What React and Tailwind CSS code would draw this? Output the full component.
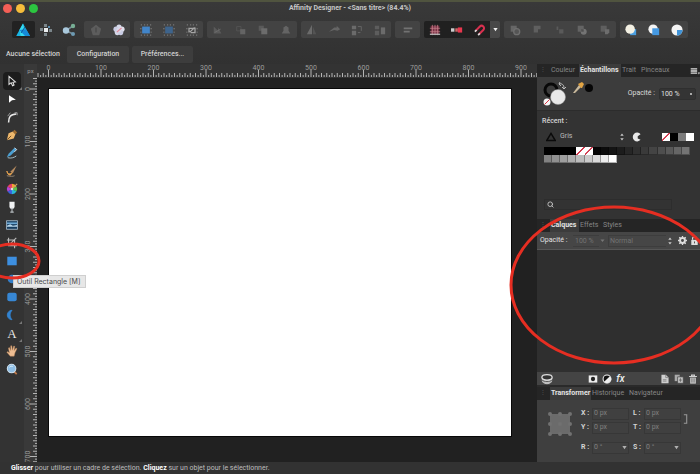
import React, { useEffect, useState } from 'react';
import { Search } from 'lucide-react';

const SCALE = 52.5; // pixels on screen for 100 document pixels

const Icon = ({ children, size = 14, className = '' }) => (
  <svg width={size} height={size} viewBox="0 0 14 14" fill="none" className={`shrink-0 ${className}`} aria-hidden="true">
    {children}
  </svg>
);

const dots = (
  <path d="M1 1h1M5 1h1M8 1h1M12 1h1M1 13h1M5 13h1M8 13h1M12 13h1M1 5v1M13 5v1M1 9v1M13 9v1" stroke="#8b8b8b" strokeWidth="1.4" />
);

// Barre d'outils principale
const personas = [
  { label: 'Persona Designer', active: true, art: <g><path d="M7 0.5L14 13H0.2z" fill="#18b5e4" /><path d="M7 0.5L9.5 13H4.8L3.4 7z" fill="#36dbf0" /><path d="M3.4 7L10 6.2 14 13H9z" fill="#1689d8" /><path d="M5 10l4-6" stroke="#0d5b9c" /></g> },
  { label: 'Persona Pixel', art: <g><path d="M5 1h3v3H5zM1 5h3v3H1zM10 6h3v3h-3zM5 10h3v3H5z" fill="#7b868b" /><path d="M5 5h4v4H5z" fill="#eceff0" /><path d="M9 3h2v2H9z" fill="#5a8cae" /></g> },
  { label: 'Persona Export', art: <g><path d="M4 7.5L11 3M4 7.5L11 11" stroke="#778d98" strokeWidth="1.5" /><circle cx="4" cy="7.5" r="3.2" fill="#a9c8dc" /><circle cx="11" cy="3" r="2.2" fill="#77ae94" /><circle cx="11" cy="11" r="2" fill="#6d9ab3" /></g> },
];

const groups = [
  {
    width: 'w-[46px]',
    items: [
      { label: 'Valeurs par défaut', art: <g><path d="M7 1l6 4.5L10.8 13H3.2L1 5.5z" fill="#5d5d5d" /><path d="M7 4v6" stroke="#484848" strokeWidth="1.5" /></g> },
      { label: 'Rétablir les valeurs', art: <g><circle cx="7" cy="3.5" r="3" fill="#d7d9ea" /><circle cx="3.5" cy="6" r="3" fill="#c9cce4" /><circle cx="10.5" cy="6" r="3" fill="#e0e0ec" /><circle cx="5" cy="10" r="3" fill="#d5d7e8" /><circle cx="9" cy="10" r="3" fill="#c9cce4" /><circle cx="7" cy="7" r="3" fill="#d9d9e8" /><path d="M4.500 9.500L10 4.500" stroke="#e08a9c" strokeWidth="1.5" /></g> },
    ],
  },
  {
    width: 'w-[69px]',
    items: [
      { label: 'Cadre de sélection', art: <g>{dots}<path d="M2.500 3h9v8h-9z" fill="#4285c9" /></g> },
      { label: 'Cadre normal', art: <g>{dots}<path d="M2.500 3h9v8h-9z" fill="#3e648c" /></g> },
      { label: 'Transformer séparément', art: <g>{dots}<path d="M3.500 10V5h5M10.500 4v6H5.500M4.500 9.500l5.500-5.500" stroke="#a5a5a5" strokeWidth="1.5" /></g> },
    ],
  },
  {
    width: 'w-[90px]',
    items: [
      { label: 'Arrière-plan', art: <g><path d="M2 3l5 5V4l4 7H2z" fill="#5a5a5a" /><path d="M3 10l7-4" stroke="#6e6e6e" /></g> },
      { label: 'Reculer', art: <g><path d="M2 3h5v5H2z" stroke="#555" /><path d="M6 6h6v6H6z" fill="#646464" /></g> },
      { label: 'Avancer', art: <g><path d="M2 2h6v6H2z" fill="#5a5a5a" /><path d="M5 5h7v7H5z" fill="#6c6c6c" /></g> },
      { label: 'Premier plan', art: <path d="M4 4l3-2 3 2v4l2 3H2l2-3z" fill="#646464" /> },
    ],
  },
  {
    width: 'w-[90px]',
    items: [
      { label: 'Miroir horizontal', art: <g><path d="M7 1v11H1z" fill="#6b6b6b" /><path d="M8 3v9h4z" fill="#545454" /></g> },
      { label: 'Miroir vertical', art: <path d="M0 9l6-5h3V2l4 4-3 2-4-1z" fill="#656565" /> },
      { label: 'Pivoter à gauche', art: <g><path d="M1 2h5v4H1zM1 8h5v5H1z" fill="#6b6b6b" /><path d="M8 3h4M12 3v5M8 10h3" stroke="#6b6b6b" /></g> },
      { label: 'Pivoter à droite', art: <g><path d="M1 2h5v4H1zM1 8h5v5H1z" fill="#5d5d5d" /><path d="M8 4h5v8H8z" fill="#6b6b6b" /></g> },
    ],
  },
  {
    width: 'w-[25px]',
    items: [{ label: 'Alignement', art: <path d="M2 5h10M2 9h7" stroke="#727272" strokeWidth="2" /> }],
  },
];

const snapping = [
  { label: 'Grille', art: <g><path d="M2 2h10v10H2z" fill="#7a3245" /><path d="M1 5h12M1 9h12M4 1v12M7 1v12M10 1v12" stroke="#c98590" strokeWidth="0.8" /><path d="M1 12h12" stroke="#b8b8b8" strokeWidth="1.5" /></g> },
  { label: 'Aligner sur les pixels', art: <g><path d="M0 5h4v4H0z" fill="#ccc" /><path d="M5 5h3v4H5z" fill="#c66" /><path d="M8 4h5v6H8z" fill="#e8374e" /></g> },
  { label: 'Magnétisme', art: <g><path d="M3 8l5-5a2.800 2.800 0 0 1 4 4l-5 5" stroke="#d8304f" strokeWidth="2.4" /><path d="M2.200 9l2-2M6 13l2-2" stroke="#ddd" strokeWidth="2" /></g> },
];

const booleans = {
  width: 'w-28',
  items: [
    { label: 'Ajouter', art: <g><path d="M2 2h7v7H2z" fill="#666" /><circle cx="9" cy="9" r="3.5" stroke="#707070" strokeWidth="1.5" fill="#555" /></g> },
    { label: 'Soustraire', art: <path d="M2 2h8v4H7v4H2z" fill="#5f5f5f" /> },
    { label: 'Intersection', art: <path d="M3 3h2v4H3zM6 6h5v5H6z" fill="#5a5a5a" /> },
    { label: 'Diviser', art: <g><path d="M2 2h7v7H2z" fill="#646464" /><circle cx="9" cy="9" r="3.5" fill="#747474" /><path d="M6 6h3v3H6z" fill="#505050" /></g> },
    { label: 'Combiner', art: <g><path d="M2 2h7v7H2z" fill="#5f5f5f" /><path d="M7 6h5v4l-2 2H7z" fill="#6d6d6d" /></g> },
  ],
};

const inserts = {
  width: 'w-[68px]',
  items: [
    { label: 'Insérer derrière', art: <g><path d="M6 6h7v7H6z" fill="#4b9fe0" /><circle cx="6" cy="6" r="5.5" fill="#f4f1e4" /></g> },
    { label: 'Insérer au-dessus', art: <g><circle cx="6" cy="6" r="5.5" fill="#f4f4f4" /><path d="M5 5h8v8H5z" fill="#4599e2" /></g> },
    { label: "Insérer à l'intérieur", art: <g><circle cx="7" cy="7" r="6.5" fill="#f4f4f4" /><path d="M7 7h6.500a6.500 6.500 0 0 1-6.500 6.500z" fill="#3f93d8" /></g> },
  ],
};

// Outils de dessin
const tools = [
  { label: 'Outil Déplacement', more: true, art: <path d="M3.500 1.500v9.500l2.500-2 1.700 3.500 1.700-.8L8 8.500l3-.5z" stroke="#e5e5e5" strokeWidth="1.2" /> },
  { label: 'Outil Nœud', art: <path d="M3.500 2.500l8 5.500-4.500 .5L3.500 11.500z" fill="#fff" /> },
  { label: 'Outil Coin', art: <g><path d="M3 13.500C3 7 5 4 12 3.500" stroke="#e8e8e8" strokeWidth="1.8" /><path d="M2 6l3-4M10 2h3v3" stroke="#aaa" /></g> },
  { label: 'Outil Plume', art: <g><path d="M1 13l2-8 5-2 3 3-2 5z" fill="#eeb86d" /><path d="M8 3l2-2 3 3-2 2z" fill="#9f6c31" /><path d="M1.500 12.500L6 8" stroke="#5c3c18" /></g> },
  { label: 'Outil Crayon', art: <g><path d="M1 12l2-4 7-7 2.500 2-7 7z" fill="#4b9fd2" /><path d="M10 1l2.500 2-3 3" stroke="#e6e6e6" /><path d="M2 12.500c4 1 7 0 10-2" stroke="#b4d1dd" /></g> },
  { label: 'Outil Pinceau vectoriel', art: <g><path d="M5 8l7.500-7.500-4.500 9z" fill="#b98d60" /><path d="M1 7c1 4 4 4 6 2-1 4-5 4-6-2z" fill="#e9a551" stroke="#e9a551" /><path d="M1 12.500c4 1 7 1 9 0" stroke="#9d8c7a" /></g> },
  { label: 'Outil Remplissage', art: <g><path d="M7 7V1a6 6 0 0 1 5.200 3z" fill="#f3a72d" /><path d="M7 7l5.200-3a6 6 0 0 1 0 6z" fill="#5cc34a" /><path d="M7 7l5.200 3A6 6 0 0 1 7 13z" fill="#2ab7d8" /><path d="M7 7v6a6 6 0 0 1-5.200-3z" fill="#3b62dd" /><path d="M7 7l-5.200 3a6 6 0 0 1 0-6z" fill="#b446d3" /><path d="M7 7L1.800 4A6 6 0 0 1 7 1z" fill="#ea3f65" /><circle cx="7" cy="7" r="1.5" fill="#ddd" /><path d="M8 6l5-5" stroke="#c99b68" strokeWidth="1.5" /></g> },
  { label: 'Outil Transparence', art: <g><path d="M4 1h6v5a3 3 0 0 1-6 0z" fill="#f0f2f3" /><path d="M7 8v5M5 13h4" stroke="#b8bec2" strokeWidth="1.3" /></g> },
  { label: 'Outil Placer une image', art: <g><path d="M0.500 2h13v10H0.500z" fill="#173c5e" stroke="#a9bccb" /><path d="M1 4h12v2H1z" fill="#6fa9d4" /><path d="M1 8l4-2 3 2 5-1v2H1z" fill="#b8d6ea" /></g> },
  { label: 'Outil Recadrage', art: <path d="M3 1v9h10M1 3.500h9V13M4 9l8-8" stroke="#bbb" strokeWidth="1.3" /> },
  { label: 'Outil Rectangle', art: <path d="M1.500 2h11v10h-11z" fill="#3d8fe0" /> },
  { label: 'Outil Ellipse', art: <circle cx="7" cy="7" r="5" fill="#347fc9" /> },
  { label: 'Outil Rectangle arrondi', art: <rect x="1.5" y="2" width="11" height="10" rx="2.5" fill="#3787d4" /> },
  { label: 'Outil Croissant', more: true, art: <path d="M7 1.500a5.500 5.500 0 0 0 0 11c-3-4-3-7 0-11z" fill="#3283d0" stroke="#3283d0" /> },
  { label: 'Outil Texte artistique', more: true, text: 'A' },
  { label: 'Outil Vue', art: <g><path d="M5 13L1 8.500l.8-.8L4 9 2.800 3.500 4 3l1.500 3.500L5.500 1h1.300l.7 5L9 1.300l1.200.3L9.500 6.500 11.800 3.500l1 .8L10.500 9 9.500 13z" fill="#edbd92" stroke="#b98355" strokeWidth="0.5" /></g> },
  { label: 'Outil Zoom', art: <g><path d="M9.500 10l3 3" stroke="#c27a4a" strokeWidth="2" /><circle cx="6.5" cy="6.5" r="5" fill="#8fbfe6" stroke="#d2e5f3" strokeWidth="1.2" /><path d="M4 5a3 3 0 0 1 4-1" stroke="#e6f3fb" /></g> },
];

const ToolButton = ({ label, more, text, art, active, onClick }) => (
  <button
    aria-label={label}
    onClick={onClick}
    className={`relative flex h-[18px] w-[18px] shrink-0 items-center justify-center rounded-sm ${active ? 'bg-[#1c1c1c]' : ''}`}
  >
    {text ? (
      <span className="font-['Liberation_Serif',serif] text-[13px] text-[#e6e6e6]">{text}</span>
    ) : (
      <Icon size={12}>{art}</Icon>
    )}
    {more && <span className="absolute -right-px bottom-0 size-0 border-b-3 border-l-3 border-b-[#777777] border-l-transparent" />}
  </button>
);

const ButtonGroup = ({ width, items }) => (
  <div className={`flex h-[17px] shrink-0 rounded-xs bg-[#434343] ${width}`}>
    {items.map((item) => (
      <button key={item.label} aria-label={item.label} className="flex flex-1 items-center justify-center">
        <Icon size={12}>{item.art}</Icon>
      </button>
    ))}
  </div>
);

const useWindowSize = () => {
  const [size, setSize] = useState([window.innerWidth, window.innerHeight]);

  useEffect(() => {
    const onResize = () => setSize([window.innerWidth, window.innerHeight]);
    window.addEventListener('resize', onResize);
    return () => window.removeEventListener('resize', onResize);
  }, []);

  return size;
};

const Ruler = ({ vertical, origin, length }) => {
  let ticks = '';
  for (let i = -4; origin + (i * SCALE) / 20 < length; i++) {
    const pos = origin + (i * SCALE) / 20;
    const len = i % 20 === 0 ? 7 : i % 2 === 0 ? 4 : 2;
    ticks += vertical ? `M${13 - len} ${pos}h${len}` : `M${pos} ${13 - len}v${len}`;
  }
  const labels = [];
  for (let v = 0; origin + (v * SCALE) / 100 + 5 < length; v += 100) labels.push(v);

  return (
    <svg className={vertical ? 'h-full w-[13px]' : 'h-3.5 w-full'} aria-hidden="true">
      <path d={ticks} stroke="#b5b5b5" strokeWidth="1" />
      {labels.map((v) => {
        const pos = origin + (v * SCALE) / 100;
        return (
          <text
            key={v}
            x={vertical ? 0 : pos}
            y={vertical ? 0 : 6}
            transform={vertical ? `translate(6 ${pos}) rotate(-90)` : undefined}
            textAnchor="middle"
            fontSize="7"
            fill="#9c9c9c"
          >
            {v}
          </text>
        );
      })}
    </svg>
  );
};

const TabBar = ({ tabs, menu }) => (
  <div role="tablist" className="flex h-[13px] shrink-0 items-stretch bg-[#252525] pl-[5px] text-[#858585]">
    <span className="w-2 text-[#555555]">⁝</span>
    {tabs.map((tab) => (
      <button
        key={tab.label}
        role="tab"
        aria-selected={!!tab.active}
        className={`px-px text-left whitespace-nowrap ${tab.width} ${tab.active ? 'bg-[#3c3c3c] font-bold text-[#e4e4e4]' : ''}`}
      >
        {tab.label}
      </button>
    ))}
    {menu && (
      <button aria-label="Menu du panneau" className="ml-auto flex items-center">
        <Icon size={10}><path d="M1 4h9M1 7h9M1 10h9" stroke="#ddd" strokeWidth="2" /><path d="M11 9h3l-1.500 3z" fill="#ddd" /></Icon>
      </button>
    )}
  </div>
);

const UpDown = () => (
  <Icon size={8}><path d="M7 1l3 4H4zM7 13l3-4H4z" fill="#c9c9c9" /></Icon>
);

const NONE = 'bg-[linear-gradient(135deg,#fff_42%,#d2374c_44%,#d2374c_54%,#fff_56%)]';

const recent = [
  'bg-black', 'bg-black', 'bg-black', 'bg-black', NONE, NONE,
  'bg-[#050505]', 'bg-[#0b0b0b]', 'bg-[#141414]', 'bg-[#1c1c1c]', 'bg-[#262626]', 'bg-[#303030]',
  'bg-[#3a3a3a]', 'bg-[#444444]', 'bg-[#4e4e4e]', 'bg-[#595959]', 'bg-[#666666]', 'bg-[#747474]',
  'bg-[#828282]', 'bg-[#909090]', 'bg-[#9e9e9e]', 'bg-[#adadad]', 'bg-[#bcbcbc]', 'bg-[#cbcbcb]',
  'bg-[#dadada]', 'bg-[#ececec]', 'bg-white',
];

const SwatchesPanel = () => (
  <section className="flex h-[155px] shrink-0 flex-col bg-[#333333]">
    <TabBar
      menu
      tabs={[
        { label: 'Couleur', width: 'w-[29px]' },
        { label: 'Échantillons', active: true, width: 'w-[42px]' },
        { label: 'Trait', width: 'w-[19px]' },
        { label: 'Pinceaux', width: 'w-8' },
      ]}
    />
    <div className="flex h-[34px] shrink-0 border-b border-[#2c2c2c] bg-[#3c3c3c] pr-1 pl-1.5">
      <svg width="54" height="34" viewBox="0 0 54 34" aria-hidden="true">
        <circle cx="8" cy="13" r="6" fill="none" stroke="#080808" strokeWidth="3" />
        <circle cx="15" cy="20" r="7.5" fill="#e9e9e9" stroke="#999" strokeWidth="0.5" />
        <circle cx="4" cy="25" r="3.5" fill="#f5f5f5" />
        <path d="M1.500 27.500l5-5" stroke="#d34" />
        <path d="M16 7c3-1 5 1 5 4M17 5l-1 2 2 2M19 10l2 2 2-2" stroke="#bbb" fill="none" />
        <circle cx="46" cy="11" r="4" fill="#060606" />
        <path d="M30 16l6-8 2 2-6 6z" fill="#c9b99c" />
        <path d="M35 7l2-1 2-1 2 2-2 4-1 0z" fill="#e2a544" />
      </svg>
      <div className="ml-auto flex items-center gap-1">
        <label htmlFor="opacity" className="text-[#dadada]">Opacité :</label>
        <select id="opacity" className="h-3 w-[37px] appearance-none rounded-xs border border-[#2f2f2f] bg-[#343434] bg-[linear-gradient(#aaa,#aaa)] bg-size-[2px_2px] bg-position-[right_3px_center] bg-no-repeat px-px leading-[10px] text-[#e0e0e0]">
          <option>100 %</option>
        </select>
      </div>
    </div>
    <div className="px-[5px] pt-1">
      <h3 className="font-medium text-[#d5d5d5]">Récent :</h3>
      <div className="mt-0.5 flex h-[13px] items-center pl-1">
        <Icon size={10} className="mr-1"><path d="M7 2L13 12H1z" stroke="#0a0a0a" strokeWidth="2" /></Icon>
        <select aria-label="Palette" className="w-[58px] appearance-none px-0 text-[#bbbbbb]">
          <option>Gris</option>
        </select>
        <UpDown />
        <button aria-label="Palette de sélection" className="ml-1.5">
          <Icon size={10}><path d="M12 3a6.200 6.200 0 1 0 0 8L8 9V6z" fill="#e8e8e8" /></Icon>
        </button>
        <div className="ml-auto flex pr-px">
          {[NONE, 'bg-black', 'bg-[#7c7c7c]', 'bg-white'].map((color) => (
            <span key={color} className={`size-2 ${color}`} />
          ))}
        </div>
      </div>
      <div className="mt-1 grid w-[148px] grid-cols-18 pl-0.5">
        {recent.map((color, i) => (
          <span key={i} className={`h-2 ${color} ${i > 5 ? 'border-r border-b border-black/30' : ''}`} />
        ))}
      </div>
    </div>
    <label className="mx-[7px] mt-auto mb-[9px] flex h-[11px] w-[128px] items-center border border-[#2d2d2d] pl-0.5">
      <Search size={7} strokeWidth={3} className="text-[#c8c8c8]" />
      <input aria-label="Rechercher" className="min-w-0 flex-1 bg-transparent outline-none" />
    </label>
  </section>
);

const LayersPanel = () => (
  <section className="flex min-h-0 flex-1 flex-col bg-[#2f2f2f]">
    <TabBar
      tabs={[
        { label: 'Calques', active: true, width: 'w-[29px]' },
        { label: 'Effets', width: 'w-[23px]' },
        { label: 'Styles', width: 'w-7' },
      ]}
    />
    <div className="flex h-[18px] shrink-0 items-center border-b border-[#575757] bg-[#464646] pl-[3px]">
      <label htmlFor="layer-opacity" className="w-[33px] whitespace-nowrap text-[#e2e2e2]">Opacité :</label>
      <select id="layer-opacity" className="h-3 w-[26px] appearance-none border-y border-[#3d3d3d] pl-0.5 leading-[10px] text-[#737373]">
        <option>100 %</option>
      </select>
      <Icon size={7}><path d="M3 5h8l-4 5z" fill="#777" /></Icon>
      <select aria-label="Mode de fusion" className="ml-0.5 h-3 w-[58px] appearance-none border border-r-0 border-[#3d3d3d] pl-px leading-[10px] text-[#737373]">
        <option>Normal</option>
      </select>
      <UpDown />
      <button aria-label="Options de fusion" className="ml-1">
        <Icon size={9}><circle cx="7" cy="7" r="3.8" stroke="#dedede" strokeWidth="3" /><path d="M7 0v2.500M7 11.500V14M0 7h2.500M11.500 7H14M2 2l2 2M10 10l2 2M12 2l-2 2M4 10l-2 2" stroke="#dedede" strokeWidth="2" /></Icon>
      </button>
      <button aria-label="Verrouiller" className="ml-[3px]">
        <Icon size={9}><path d="M4 6V4a3 3 0 0 1 6 0v2" stroke="#ddd" strokeWidth="1.8" /><path d="M2 6h10v8H2z" fill="#dedede" /><path d="M7 8.500v3" stroke="#555" strokeWidth="1.6" /></Icon>
      </button>
    </div>
    <div className="flex-1" />
    <div className="flex h-[13px] shrink-0 items-center bg-[#444444] pr-0.5 pl-1">
      <button aria-label="Calques modifiables">
        <Icon size={12}><path d="M1 5v4c0 2 3 4 6 4s6-2 6-4V5z" fill="#bdbdbd" /><path d="M1 8c2 2.500 10 2.500 12 0" stroke="#444" /><ellipse cx="7" cy="5" rx="6" ry="3.2" fill="#333" stroke="#dedede" strokeWidth="1.5" /></Icon>
      </button>
      <div className="ml-auto flex items-center gap-1">
        <button aria-label="Masque"><Icon size={10}><path d="M1 2h12v10H1z" fill="#eee" /><circle cx="7" cy="7" r="3" fill="#222" /></Icon></button>
        <button aria-label="Réglages"><Icon size={10}><circle cx="7" cy="7" r="5.5" fill="#111" stroke="#eee" strokeWidth="1.5" /><path d="M11 3a5.500 5.500 0 0 1-8 8z" fill="#eee" /></Icon></button>
        <button aria-label="Effets de calque" className="text-[10px] leading-[10px] font-medium text-[#eeeeee] italic">fx</button>
      </div>
      <div className="ml-auto flex items-center gap-1">
        <button aria-label="Nouveau calque"><Icon size={10}><path d="M2 1h6l4 4v8H2z" fill="#cfcfcf" /><path d="M8 1v4h4M4 8h5M4 10h5" stroke="#777" /></Icon></button>
        <button aria-label="Dupliquer"><Icon size={10}><path d="M1 1h7v9H1z" fill="#aaa" /><path d="M5 4h8v9H5z" fill="#c2c2c2" stroke="#444" /><path d="M9 6v5M7 8.500h4" stroke="#555" /></Icon></button>
        <button aria-label="Supprimer"><Icon size={10}><path d="M1.500 3.500h11M5 3V1.500h4V3" stroke="#d0d0d0" strokeWidth="1.6" /><path d="M3 5h8v8.500H3z" fill="#c6c6c6" /><path d="M5.500 6v6M8.500 6v6" stroke="#555" /></Icon></button>
      </div>
    </div>
  </section>
);

const Field = ({ id, value, className = '' }) => (
  <div className={`flex items-center ${className}`}>
    <label htmlFor={id} className="w-[11px] font-bold whitespace-nowrap text-[#d4d4d4]">{id} :</label>
    <input id={id} defaultValue={value} className="h-3 w-[37px] border border-[#373737] bg-[#404040] px-px text-[#808080]" />
  </div>
);

const AngleField = ({ id }) => (
  <div className="relative mt-1.5">
    <Field id={id} value="0 °" />
    <span className="absolute top-1 right-0.5">
      <Icon size={5}><path d="M1 3h12L7 12z" fill="#b0b0b0" /></Icon>
    </span>
  </div>
);

const TransformPanel = () => (
  <section className="mt-0.5 flex h-[75px] shrink-0 flex-col bg-[#3f3f3f]">
    <TabBar
      tabs={[
        { label: 'Transformer', active: true, width: 'w-[41px]' },
        { label: 'Historique', width: 'w-[37px]' },
        { label: 'Navigateur', width: 'w-[38px]' },
      ]}
    />
    <div className="flex pt-[7px] pl-2.5">
      <svg width="26" height="26" viewBox="0 0 26 26" className="mt-1 mr-2 shrink-0" aria-label="Point d'ancrage">
        <path d="M3 3h20v20H3z" fill="#6b6b6b" />
        {[3, 13, 23].map((x) => [3, 13, 23].map((y) => <circle key={`${x}-${y}`} cx={x} cy={y} r="2" fill="#717171" />))}
      </svg>
      <div className="grid grid-cols-2 gap-x-1 gap-y-px">
        <Field id="X" value="0 px" />
        <Field id="L" value="0 px" />
        <Field id="Y" value="0 px" />
        <Field id="T" value="0 px" />
        <AngleField id="R" />
        <AngleField id="S" />
      </div>
      <button aria-label="Lier les dimensions" className="mt-1 h-4">
        <Icon size={10}><path d="M4 1h4v4M8 9v4H4M8 5v4" stroke="#999" strokeWidth="1.5" /></Icon>
      </button>
    </div>
  </section>
);

export default function App() {
  const [activeTool, setActiveTool] = useState('Outil Déplacement');
  const [width, height] = useWindowSize();

  return (
    <div className="relative flex h-screen flex-col overflow-hidden bg-[#333333] font-[Roboto,'Liberation_Sans',sans-serif] text-[7px] leading-[13px] text-[#c8c8c8]">
      <header className="flex h-16 shrink-0 flex-col border-t-2 border-[#50543f] bg-linear-to-b from-[#393939] to-[#313131]">
        <div className="flex h-3 items-center px-[3px]">
          <div className="flex w-14 gap-1">
            <button aria-label="Fermer" className="size-[9px] rounded-full bg-[#f45f56]" />
            <button aria-label="Réduire" className="size-[9px] rounded-full bg-[#f6bd3b]" />
            <button aria-label="Agrandir" className="size-[9px] rounded-full bg-[#2cc640]" />
          </div>
          <h1 className="flex-1 pr-14 text-center text-[7px] leading-3 font-bold text-[#c6c6c6]">Affinity Designer - &lt;Sans titre&gt; (84.4%)</h1>
        </div>

        <div className="mt-[7px] flex gap-1 pl-3">
          <div className="flex w-[68px] shrink-0">
            {personas.map((p) => (
              <button key={p.label} aria-label={p.label} className={`flex h-[17px] flex-1 items-center justify-center rounded-xs ${p.active ? 'bg-[#222222]' : ''}`}>
                <Icon>{p.art}</Icon>
              </button>
            ))}
          </div>
          {groups.map((group, i) => <ButtonGroup key={i} {...group} />)}
          <div className="flex h-[17px] shrink-0">
            <div className="flex w-[66px] rounded-l-xs bg-[#202020]">
              {snapping.map((item) => (
                <button key={item.label} aria-label={item.label} className="flex flex-1 items-center justify-center">
                  <Icon size={12}>{item.art}</Icon>
                </button>
              ))}
            </div>
            <button aria-label="Options de magnétisme" className="flex w-2.5 items-center justify-center rounded-r-xs bg-[#484848]">
              <Icon size={5}><path d="M1 3h12L7 12z" fill="#eee" /></Icon>
            </button>
          </div>
          <ButtonGroup {...booleans} />
          <ButtonGroup {...inserts} />
        </div>

        <div className="mt-2 flex h-[17px] items-center gap-[3px] leading-[17px] font-medium text-[#d2d2d2]">
          <span className="w-16 pl-1.5 whitespace-nowrap">Aucune sélection</span>
          <button className="w-[62px] rounded-xs bg-[#3d3d3d]">Configuration</button>
          <button className="w-[61px] rounded-xs bg-[#3d3d3d]">Préférences...</button>
        </div>
      </header>

      <div className="flex min-h-0 flex-1">
        <nav aria-label="Outils" className="flex w-6 shrink-0 flex-col items-center bg-[#333333] pt-2">
          {tools.map((tool) => (
            <ToolButton key={tool.label} {...tool} active={activeTool === tool.label} onClick={() => setActiveTool(tool.label)} />
          ))}
        </nav>

        <main className="grid min-w-0 flex-1 grid-cols-[13px_1fr] grid-rows-[14px_1fr] bg-[#212121]">
          <div className="bg-[#393939] text-center text-[6px] leading-[14px] text-[#999999]">px</div>
          <div className="min-w-0 overflow-hidden bg-[#333333]">
            <Ruler origin={11.5} length={width - 200} />
          </div>
          <div className="min-h-0 overflow-hidden bg-[#393939]">
            <Ruler vertical origin={11} length={height - 90} />
          </div>
          <div className="flex pt-[11px] pr-[26px] pb-[26px] pl-3">
            <div className="flex-1 bg-white shadow-[0_0_0_1px_#080808]" />
          </div>
        </main>

        <aside className="relative flex w-[163px] shrink-0 flex-col bg-[#2a2a2a]">
          <SwatchesPanel />
          <LayersPanel />
          <TransformPanel />
          <svg width="212" height="164" className="pointer-events-none absolute top-[139px] -left-7" aria-hidden="true">
            <ellipse cx="105" cy="82" rx="103" ry="78" fill="none" stroke="#e62e22" strokeWidth="3" />
          </svg>
        </aside>
      </div>

      <footer className="h-3 shrink-0 bg-[#323232] pl-[11px] leading-[12px] whitespace-nowrap text-[#bdbdbd]">
        <b className="text-white">Glisser</b> pour utiliser un cadre de sélection. <b className="text-white">Cliquez</b> sur un objet pour le sélectionner.
      </footer>

      <div role="tooltip" className="absolute top-[275px] left-[13px] h-[13px] w-[73px] border border-[#cfcfcf] bg-[#e7e7e7] pl-[3px] text-[7px] leading-[12px] whitespace-nowrap text-[#4a4a4a]">
        <span className="font-[Inter,sans-serif]">Outil Rectangle [M]</span>
      </div>
      <svg width="44" height="40" className="pointer-events-none absolute top-[241px] left-0" aria-hidden="true">
        <ellipse cx="12" cy="20" rx="27" ry="17" fill="none" stroke="#e62e22" strokeWidth="3" />
      </svg>
    </div>
  );
}
